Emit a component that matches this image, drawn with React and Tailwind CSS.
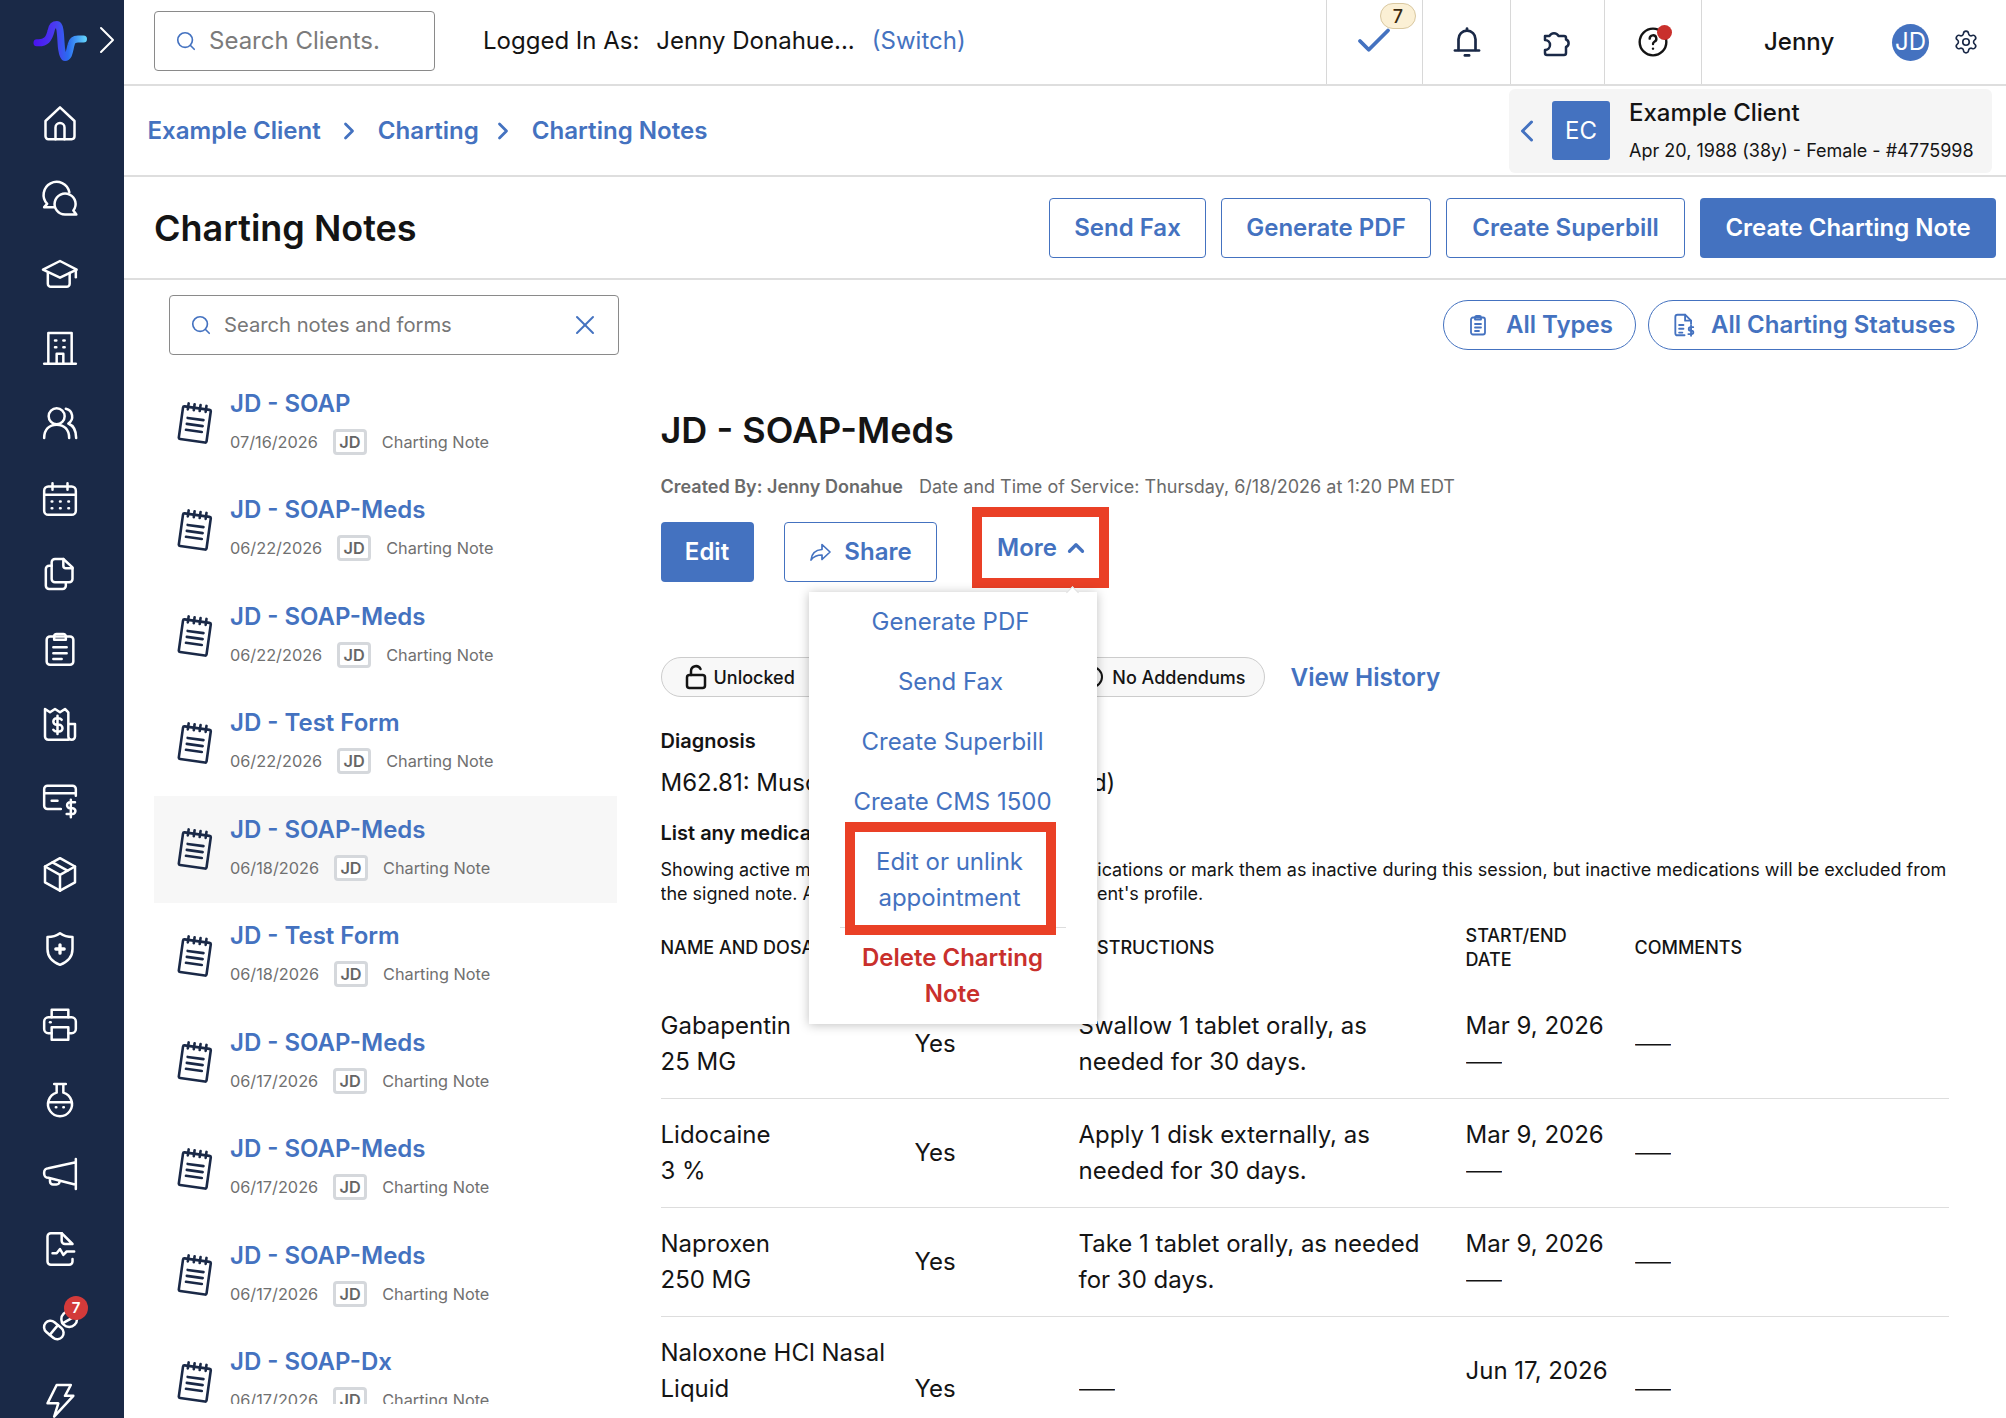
import React from "react";
import { ChevronRight, ChevronLeft, ChevronUp, Search, X, Check, Settings } from "lucide-react";

const S = ({ children, size = 40, sw = 1.5, className = "" }) => (
  <svg width={size} height={size} viewBox="0 0 24 24" fill="none" stroke="currentColor" strokeWidth={sw} strokeLinecap="round" strokeLinejoin="round" className={className}>
    {children}
  </svg>
);

const nav = [
  <S><path d="M3.300 10.800 12 2.600l8.700 8.200V20a1.700 1.700 0 0 1-1.700 1.700H5A1.700 1.700 0 0 1 3.300 20Z" /><path d="M9.300 21.700v-7a2.700 2.700 0 0 1 5.400 0v7" /></S>,
  <S><path d="M8.500 17.500h-6l1.800-2A7.800 7.800 0 1 1 17.600 8.600" /><path d="M15 21.900h6.800L20 19.500a6.300 6.300 0 1 0-5 2.400Z" /></S>,
  <S><path d="M12 4.800 1.800 10 12 14.800 22 10Z" /><path d="M4.700 12v6.500a1.800 1.800 0 0 0 1.800 1.800H16a1.800 1.800 0 0 0 1.800-1.800V12" /><path d="M21.500 10.500v4" /></S>,
  <S><path d="M5 21.500V3h14v18.500" /><path d="M2.500 21.500h19" /><path d="M9 7.500h.8M14 7.500h.8M9 11.500h.8M14 11.500h.8" /><path d="M10 21.500v-6h4v6" /></S>,
  <S><circle cx="10" cy="8" r="4.800" /><path d="M2.500 21c0-5 3-8 7.500-8s7.500 3 7.500 8" /><path d="M15.500 3.500a4.800 4.800 0 0 1 1.500 8.800c3 1.200 4.700 4.500 4.700 8.700" /></S>,
  <S><rect x="2.500" y="4.500" width="19" height="17" rx="2.500" /><path d="M2.500 9.500h19M7.500 2.500v4M16.500 2.500v4" /><path d="M7 13.500h.4M12 13.500h.4M17 13.500h.4M7 17.500h.4M12 17.500h.4M17 17.500h.4" /></S>,
  <S><path d="M9 3h5l5.500 5v7a2 2 0 0 1-2 2H9a2 2 0 0 1-2-2V5a2 2 0 0 1 2-2Z" /><path d="M14 3v4a1.500 1.500 0 0 0 1.500 1.500h4" /><path d="M7 7H5.500a2 2 0 0 0-2 2v10a2 2 0 0 0 2 2h8a2 2 0 0 0 2-2v-2" /></S>,
  <S><rect x="4" y="4.500" width="16" height="17" rx="2" /><path d="M8.500 6.500V4.500a1.500 1.500 0 0 1 1.500-1.500h4a1.500 1.500 0 0 1 1.500 1.500v2Z" /><path d="M8 11h8M8 14.500h8M8 18h5" /></S>,
  <S><path d="M17 21.500H5a2 2 0 0 1-2-2V3l3 2 3-2 3 2 3-2 2 2v14.500a2 2 0 0 0 2 2 2 2 0 0 0 2-2V12h-4" /><path d="M13 9.500a2.500 2.500 0 0 0-2-1h-1a2 2 0 0 0 0 4h1.500a2 2 0 0 1 0 4H10a2.500 2.500 0 0 1-2-1M10.500 7v11" /></S>,
  <S><path d="M21.500 10V6a2 2 0 0 0-2-2h-15a2 2 0 0 0-2 2v10a2 2 0 0 0 2 2h8" /><path d="M2.500 8.500h19M7 13h3.500" /><path d="M21 14h-3a1.700 1.700 0 0 0 0 3.500h1.500a1.700 1.700 0 0 1 0 3.500H16M18.500 12.500V23" /></S>,
  <S><path d="M12 2.500 3 7.500v9.500l9 5 9-5V7.500Z" /><path d="M3 7.500 12 12.500l9-5M12 12.500V22" /><path d="M7.500 5 16.500 10" /></S>,
  <S><path d="M12 2.500c2 1.500 4.500 2.300 7.500 2.300V12c0 5-3.500 8-7.500 9.500C8 20 4.500 17 4.500 12V4.800c3 0 5.500-.8 7.500-2.300Z" /><path d="M12 9.500v5M9.500 12h5" strokeWidth="2" /></S>,
  <S><path d="M7 8V3.500h10V8" /><path d="M7 17.500H5a2.500 2.500 0 0 1-2.500-2.500v-4.500A2.500 2.500 0 0 1 5 8h14a2.500 2.500 0 0 1 2.500 2.500V15a2.500 2.500 0 0 1-2.500 2.500h-2" /><path d="M7 14h10v7.500H7Z" /><path d="M6 11h.4" /></S>,
  <S><path d="M8.500 3h7M10 3v5.200a7.200 7.200 0 1 0 4 0V3" /><path d="M5 14h14" /><path d="M9.500 17h.3M14 17h.3" /></S>,
  <S><path d="M21.500 3v18M21.500 5 5 8.500a2.500 2.500 0 0 0-2.500 2.500v1a2.500 2.500 0 0 0 2.500 2.300L21.500 18.500" /><path d="M6 14.800v1.700a1.800 1.800 0 0 0 1.800 1.800h2a2 2 0 0 0 2-1.800" /></S>,
  <S><path d="M13 2.500H6.500a2 2 0 0 0-2 2V19.500a2 2 0 0 0 2 2h11a2 2 0 0 0 2-2v-1.500" /><path d="M13 2.500 19.500 9H15a2 2 0 0 1-2-2Z" /><path d="M7.500 14.500h2.500l2-2.500 2 3.500 2-2h4.500" /></S>,
  <S><g transform="translate(8.300 15) rotate(40)"><rect x="-6.500" y="-3.800" width="13" height="7.600" rx="3.800" /><path d="M0-3.800v7.600" /></g><circle cx="17.500" cy="8.500" r="4.700" /><path d="M13.500 11l8-4.500" /></S>,
  <S><path d="M10 3h8.500L15 9.500h5L8.500 22l2.500-8H4.500Z" /></S>,
];

const Logo = () => (
  <svg width="58" height="44" viewBox="0 0 58 44" fill="none">
    <defs>
      <linearGradient id="lg" x1="3" y1="0" x2="54" y2="0" gradientUnits="userSpaceOnUse">
        <stop offset="0" stopColor="#4a14f0" />
        <stop offset="0.4" stopColor="#4a3cf0" />
        <stop offset="0.65" stopColor="#2a6cf0" />
        <stop offset="1" stopColor="#62d2fb" />
      </linearGradient>
    </defs>
    <path d="M5 24.700C14 25.500 17 21 19 13 20 6.500 23 6.500 25 6.500c3 0 3.500 8.500 4 17.500.5 10 2 15.500 4 15.500 4 0 4.500-6.500 6-12.500 1-5 3-6 7-6h5.500" stroke="url(#lg)" strokeWidth="7" strokeLinecap="round" strokeLinejoin="round" />
  </svg>
);

const Note = () => (
  <svg width="36" height="42" viewBox="0 0 36 42" fill="none" stroke="#1a2947" strokeWidth="2.600" strokeLinecap="round" strokeLinejoin="round" className="shrink-0">
    <g transform="rotate(8 18 21)">
      <rect x="4" y="6" width="28" height="33" rx="1.500" />
      <path d="M9 2.500v6M15 2.500v6M21 2.500v6M27 2.500v6" />
      <path d="M10 17h16M10 23h16M10 29h16" />
    </g>
  </svg>
);

const Dash = () => <span className="inline-block origin-left scale-x-150 font-light">—</span>;

const notes = [
  ["JD - SOAP", "07/16/2026"],
  ["JD - SOAP-Meds", "06/22/2026"],
  ["JD - SOAP-Meds", "06/22/2026"],
  ["JD - Test Form", "06/22/2026"],
  ["JD - SOAP-Meds", "06/18/2026", true],
  ["JD - Test Form", "06/18/2026"],
  ["JD - SOAP-Meds", "06/17/2026"],
  ["JD - SOAP-Meds", "06/17/2026"],
  ["JD - SOAP-Meds", "06/17/2026"],
  ["JD - SOAP-Dx", "06/17/2026"],
];

const rows = [
  [<>Gabapentin<br />25 MG</>, "Yes", <>Swallow 1 tablet orally, as<br />needed for 30 days.</>, <>Mar 9, 2026<br /><Dash /></>, <Dash />],
  [<>Lidocaine<br />3 %</>, "Yes", <>Apply 1 disk externally, as<br />needed for 30 days.</>, <>Mar 9, 2026<br /><Dash /></>, <Dash />],
  [<>Naproxen<br />250 MG</>, "Yes", <>Take 1 tablet orally, as needed<br />for 30 days.</>, <>Mar 9, 2026<br /><Dash /></>, <Dash />],
  [<>Naloxone HCl Nasal<br />Liquid<br />4 MG</>, "Yes", <Dash />, <>Jun 17, 2026<br /><Dash /></>, <Dash />],
];

const Btn = ({ children, w }) => (
  <button className={`h-[60px] ${w} rounded-[4px] border border-[#4472c0] bg-white text-[24px] font-semibold text-[#4472c0] flex items-center justify-center`}>{children}</button>
);

const Seg = ({ w, children }) => (
  <div className={`${w} h-full border-l border-[#d8d8d8] flex items-center justify-center relative shrink-0`}>{children}</div>
);

export default function App() {
  return (
    <div className="flex h-[1418px] w-[2006px] overflow-hidden bg-white font-[Inter,sans-serif] text-[#141414]">
      <aside className="w-[124px] shrink-0 bg-[#1a2947] text-white flex flex-col">
        <div className="h-[85.500px] w-full shrink-0 flex items-start pl-[32px] pt-[18px] gap-[9px]">
          <Logo />
          <svg width="16" height="28" viewBox="0 0 16 28" fill="none" stroke="white" strokeWidth="2" strokeLinecap="round" strokeLinejoin="round" className="mt-[8px]"><path d="M2 2l12 12L2 26" /></svg>
        </div>
        {nav.map((ic, i) => (
          <div key={i} className="h-[75.100px] w-full shrink-0 flex items-center justify-center relative pr-[5px]">
            {ic}
            {i === 16 && <span className="absolute left-[64px] top-[9px] h-[24px] w-[24px] rounded-full bg-[#d33a3a] text-[15px] font-semibold flex items-center justify-center">7</span>}
          </div>
        ))}
      </aside>

      <main className="flex-1 flex flex-col min-w-0">
        <header className="h-[86px] shrink-0 border-b-2 border-[#dedede] flex items-center pl-[30px] pb-[2px]">
          <div className="h-[60px] w-[281px] rounded-[4px] border border-[#8a8a8a] flex items-center pl-[20px] gap-[12px] text-[24px] text-[#7b7b7b] shrink-0">
            <Search size={22} strokeWidth={1.800} className="text-[#4472c0]" />
            Search Clients.
          </div>
          <div className="ml-[48px] text-[24px] whitespace-nowrap">Logged In As:<span className="ml-[17px]">Jenny Donahue...</span></div>
          <div className="ml-[17px] text-[24px] text-[#4472c0]">(Switch)</div>
          <div className="ml-auto h-[84px] -mb-[2px] flex items-stretch">
            <Seg w="w-[96px]">
              <Check size={42} strokeWidth={2.200} className="text-[#4472c0] -ml-[2px] -mt-[2px]" />
              <span className="absolute left-[53px] top-[3px] h-[26px] w-[36px] rounded-full border border-[#d9c8a0] bg-[#fbf0d5] text-[18px] font-medium text-[#3a2a10] flex items-center justify-center">7</span>
            </Seg>
            <Seg w="w-[88px]">
              <svg width="34" height="34" viewBox="0 0 24 24" fill="none" stroke="#1a2947" strokeWidth="1.900" strokeLinecap="round" strokeLinejoin="round"><path d="M6 17.500V10a6 6 0 0 1 12 0v7.500" /><path d="M3.500 18h17" /><path d="M12 2.500v1.500" /><path d="M10.500 21.500h3" /></svg>
            </Seg>
            <Seg w="w-[94px]">
              <svg width="32" height="32" viewBox="0 0 32 32" fill="none" stroke="#1a2947" strokeWidth="2.500" strokeLinecap="round" strokeLinejoin="round"><path d="M3 10h4.500a5 5 0 0 1 9 0H22a2 2 0 0 1 2 2v1.500a4 4 0 0 1 0 7.500v6a2 2 0 0 1-2 2H5a2 2 0 0 1-2-2v-3a5 5 0 0 0 0-10Z" /></svg>
            </Seg>
            <Seg w="w-[97px]">
              <svg width="32" height="32" viewBox="0 0 24 24" fill="none" stroke="#141414" strokeWidth="1.800" strokeLinecap="round"><circle cx="12" cy="12" r="10" /><path d="M9.500 9.500a2.500 2.500 0 1 1 3.500 2.300c-.7.400-1 1-1 1.700" /><path d="M12 17h.01" /></svg>
              <span className="absolute left-[52px] top-[25px] h-[15px] w-[15px] rounded-full bg-[#c9302c]" />
            </Seg>
            <div className="w-[305px] h-full border-l border-[#d8d8d8] flex items-center pl-[62px] shrink-0">
              <span className="text-[24px] font-medium w-[128px]">Jenny</span>
              <span className="h-[37px] w-[37px] rounded-full bg-[#4472c0] text-white text-[24px] flex items-center justify-center">JD</span>
              <Settings size={26} strokeWidth={1.500} className="ml-[24px] text-[#1a2947]" />
            </div>
          </div>
        </header>

        <div className="h-[91px] shrink-0 border-b-2 border-[#dedede] flex items-center pl-[23.500px] pr-[14px] text-[24.100px] font-semibold text-[#4472c0]">
          <span className="pt-[1px]">Example Client</span>
          <ChevronRight size={28} strokeWidth={2.400} className="mx-[14.500px]" />
          <span className="pt-[1px]">Charting</span>
          <ChevronRight size={28} strokeWidth={2.400} className="ml-[10px] mr-[15px]" />
          <span className="pt-[1px]">Charting Notes</span>
          <div className="ml-auto h-[84px] w-[483px] rounded-[6px] bg-[#f5f5f5] flex items-center font-normal">
            <ChevronLeft size={36} strokeWidth={2} />
            <div className="ml-[7px] h-[59px] w-[58px] rounded-[3px] bg-[#4472c0] text-white text-[24px] flex items-center justify-center">EC</div>
            <div className="ml-[19px] flex flex-col">
              <span className="text-[24px] font-medium text-[#141414] leading-[30px]">Example Client</span>
              <span className="text-[18px] text-[#141414] leading-[26px] mt-[10px] whitespace-nowrap">Apr 20, 1988 (38y) - Female - #4775998</span>
            </div>
          </div>
        </div>

        <div className="h-[103px] shrink-0 border-b-2 border-[#dedede] flex items-center pl-[30px] pr-[10px]">
          <h1 className="text-[36px] font-semibold">Charting Notes</h1>
          <div className="ml-auto flex gap-[15px]">
            <Btn w="w-[157px]">Send Fax</Btn>
            <Btn w="w-[210px]">Generate PDF</Btn>
            <Btn w="w-[239px]">Create Superbill</Btn>
            <button className="h-[60px] w-[296px] rounded-[4px] bg-[#4472c0] text-[24px] font-semibold text-white">Create Charting Note</button>
          </div>
        </div>

        <div className="flex flex-1 min-h-0">
          <section className="w-[463px] ml-[30px] shrink-0 flex flex-col h-[1124px]">
            <div className="ml-[15px] mt-[15px] h-[60px] w-[450px] shrink-0 rounded-[4px] border border-[#8a8a8a] flex items-center pl-[20px] pr-[17px] gap-[12px] text-[20.200px] text-[#777777]">
              <Search size={22} strokeWidth={1.800} className="text-[#4472c0]" />
              <span className="flex-1">Search notes and forms</span>
              <X size={32} strokeWidth={1.500} className="text-[#4472c0]" />
            </div>
            <div className="mt-[15px] flex-1 overflow-hidden">
              {notes.map(([t, d, active], i) => (
                <div key={i} className={`h-[106.500px] flex items-center pl-[23px] ${active ? "bg-[#f7f7f7]" : ""}`}>
                  <Note />
                  <div className="ml-[17px] flex flex-col pb-[3px]">
                    <span className="text-[24px] font-semibold text-[#4472c0] leading-[30px]">{t}</span>
                    <div className="mt-[10px] flex items-center text-[16.300px] text-[#707070] leading-[26px]">
                      <span>{d}</span>
                      <span className="mx-[15px] h-[26px] w-[34px] rounded-[4px] border-[3px] border-[#d5d8dc] bg-white text-[#666666] font-semibold flex items-center justify-center">JD</span>
                      <span>Charting Note</span>
                    </div>
                  </div>
                </div>
              ))}
            </div>
          </section>

          <section className="ml-[43.500px] w-[1317.500px] shrink-0 flex flex-col h-[1124px] overflow-hidden">
            <div className="mt-[20px] flex justify-end gap-[12px] text-[24px] font-semibold text-[#4472c0]">
              <div className="h-[50px] w-[193px] rounded-full border border-[#4472c0] flex items-center pl-[22px] gap-[16px]">
                <svg width="24" height="24" viewBox="0 0 24 24" fill="none" stroke="#4472c0" strokeWidth="1.800" strokeLinecap="round" strokeLinejoin="round"><rect x="5" y="4.500" width="14" height="17" rx="2" /><path d="M9 6.500v-2a1.500 1.500 0 0 1 1.500-1.500h3A1.500 1.500 0 0 1 15 4.500v2ZM9 11h6M9 14.500h6M9 18h4" /></svg>
                All Types
              </div>
              <div className="h-[50px] w-[330px] rounded-full border border-[#4472c0] flex items-center pl-[22px] gap-[14px]">
                <svg width="26" height="26" viewBox="0 0 24 24" fill="none" stroke="#4472c0" strokeWidth="1.700" strokeLinecap="round" strokeLinejoin="round"><path d="M12.500 21.500H6a2 2 0 0 1-2-2v-15a2 2 0 0 1 2-2h7l5.500 5.500v3" /><path d="M13 2.500V8h5.500M7.500 12h4M7.500 15.500h4M7.500 19h3" /><path d="M20.500 14H18a1.500 1.500 0 0 0 0 3.200h1a1.500 1.500 0 0 1 0 3.200h-3M18.500 12.500v9.500" /></svg>
                All Charting Statuses
              </div>
            </div>

            <h2 className="mt-[58px] text-[36px] font-semibold leading-[44px]">JD - SOAP-Meds</h2>
            <div className="mt-[21px] flex text-[18px] leading-[28px] text-[#6a6a6a]">
              <span className="font-semibold">Created By: Jenny Donahue</span>
              <span className="ml-[16px]">Date and Time of Service: Thursday, 6/18/2026 at 1:20 PM EDT</span>
            </div>

            <div className="relative mt-[6px] h-[81px] shrink-0 flex items-start">
              <button className="mt-[15px] h-[60px] w-[93px] rounded-[4px] bg-[#4472c0] text-[24px] font-semibold text-white">Edit</button>
              <button className="mt-[15px] ml-[30px] h-[60px] w-[153px] rounded-[4px] border border-[#4472c0] text-[24px] font-semibold text-[#4472c0] flex items-center justify-center gap-[12px]">
                <svg width="24" height="24" viewBox="0 0 24 24" fill="none" stroke="#4472c0" strokeWidth="1.700" strokeLinejoin="round"><path d="M14 4.500 22 12l-8 7.500V15c-5 0-8 1-11 5 .5-5.500 4-10 11-10.500Z" /></svg>
                Share
              </button>
              <button className="ml-[35.500px] h-[81px] w-[137px] border-[10px] border-[#ea4026] bg-white text-[24px] font-semibold text-[#4472c0] flex items-center justify-center gap-[6px] pl-[5px]">
                More <ChevronUp size={26} strokeWidth={3} />
              </button>

              <div className="absolute left-[148px] top-[85px] z-10 w-[288px] h-[432px] bg-white shadow-[0_1px_10px_rgba(0,0,0,0.25)] flex flex-col items-center text-[24px] text-[#4472c0] leading-[36px] text-center">
                <div className="absolute left-[259px] -top-[4px] h-[9px] w-[9px] rotate-45 bg-white border-l border-t border-[#dddddd]" />
                <div className="h-[60px] py-[12px] -ml-[4px]">Generate PDF</div>
                <div className="h-[60px] py-[12px] -ml-[4px]">Send Fax</div>
                <div className="h-[60px] py-[12px]">Create Superbill</div>
                <div className="h-[60px] py-[12px]">Create CMS 1500</div>
                <div className="h-[96px] w-[226px] py-[12px] pr-[6px] border-b border-[#dddddd]">
                  Edit or unlink<br />appointment
                </div>
                <div className="py-[12px] font-semibold text-[#c9302c] w-[200px]">Delete Charting Note</div>
                <div className="absolute left-[36px] top-[230px] h-[113px] w-[211px] border-[10px] border-[#ea4026]" />
              </div>
            </div>

            <div className="mt-[69px] h-[40px] shrink-0 flex items-center text-[18px] font-medium">
              <div className="h-[40px] w-[190px] shrink-0 rounded-full border border-[#cccccc] bg-[#f8f8f8] flex items-center pl-[23px] gap-[7px]">
                <svg width="22" height="26" viewBox="0 0 22 26" fill="none" stroke="#141414" strokeWidth="2.500" strokeLinecap="round"><rect x="2" y="11" width="18" height="13" rx="2.500" /><path d="M6 11V7a5 5 0 0 1 9.500-2" /></svg>
                Unlocked
              </div>
              <div className="ml-[90px] h-[40px] w-[324px] shrink-0 rounded-full border border-[#cccccc] bg-[#f8f8f8] flex items-center justify-end pr-[18px] gap-[9px]">
                <span className="h-[22px] w-[22px] rounded-full border-2 border-[#141414]" />
                No Addendums
              </div>
              <span className="ml-[26px] pt-[1px] text-[24.300px] font-semibold text-[#4472c0]">View History</span>
            </div>

            <div className="mt-[29px] text-[20px] font-semibold leading-[30px]">Diagnosis</div>
            <div className="mt-[9px] text-[24px] leading-[36px]">M62.81: Muscle weakness (generalized)</div>
            <div className="mt-[17px] text-[20px] font-semibold leading-[30px]">List any medications</div>
            <p className="mt-[10px] whitespace-nowrap text-[18px] leading-[24px]">
              Showing active medications. You can add new medications or mark them as inactive during this session, but inactive medications will be excluded from
              <br />
              the signed note. Active medications stays on the client's profile.
            </p>

            <div className="mt-[18px] w-[1288px] grid shrink-0 grid-cols-[254px_164px_387px_169px_1fr] h-[48px] items-center text-[18px] font-medium leading-[24px] mb-[18px]">
              <div>NAME AND DOSAGE</div>
              <div>ACTIVE</div>
              <div>INSTRUCTIONS</div>
              <div>START/END<br />DATE</div>
              <div>COMMENTS</div>
            </div>
            {rows.map((r, i) => (
              <div key={i} className={`w-[1288px] shrink-0 grid grid-cols-[254px_164px_387px_169px_1fr] ${i === 3 ? "h-[144px]" : "h-[109px]"} items-center border-b border-[#dddddd] text-[24px] leading-[36px]`}>
                {r.map((c, j) => <div key={j} className="whitespace-nowrap">{c}</div>)}
              </div>
            ))}
          </section>
        </div>
      </main>
    </div>
  );
}
